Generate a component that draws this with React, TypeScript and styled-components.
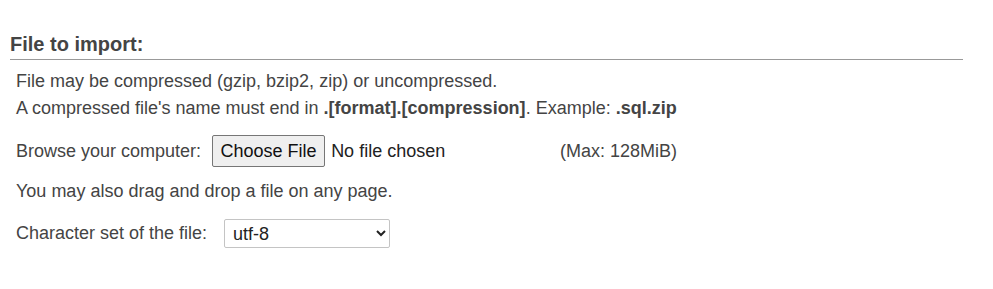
import styled, { createGlobalStyle } from "styled-components";

const GlobalStyle = createGlobalStyle`
  html, body {
    margin: 0;
    padding: 0;
    background: #fff;
  }
  body {
    font-family: "Liberation Sans", Arial, sans-serif;
    color: #444;
  }
`;

const Page = styled.div`
  padding: 32px 30px 0 10px;
`;

const Heading = styled.h3`
  margin: 0;
  padding: 0 0 3px;
  font-size: 20px;
  font-weight: bold;
  line-height: 24px;
  color: #444;
  border-bottom: 1px solid #999;
`;

const Body = styled.div`
  padding: 8px 0 0 6px;
  font-size: 18px;
`;

const Line = styled.p<{ $top?: number }>`
  margin: ${(p) => p.$top ?? 0}px 0 0;
  line-height: 27px;
`;

const Row = styled.div<{ $top?: number }>`
  display: flex;
  align-items: center;
  margin-top: ${(p) => p.$top ?? 0}px;
`;

const Label = styled.label<{ $gap: number }>`
  margin-right: ${(p) => p.$gap}px;
`;

const FileInput = styled.input`
  width: 338px;
  font: 18px "Liberation Sans", Arial, sans-serif;
  color: #222;

  &::file-selector-button {
    font: 18px "Liberation Sans", Arial, sans-serif;
    color: #111;
    height: 32px;
    padding: 0 7.5px;
    margin-right: 6px;
    background: #efefef;
    border: 1px solid #767676;
    border-radius: 2px;
  }
`;

const Max = styled.span`
  margin-left: 10px;
`;

const Select = styled.select`
  width: 166px;
  height: 29px;
  padding: 0 4px 0 4px;
  font: 18px "Liberation Sans", Arial, sans-serif;
  color: #222;
  background: #fff;
  border: 1px solid #c4c4c4;
  border-radius: 2px;
`;

export default function App() {
  return (
    <>
      <GlobalStyle />
      <Page>
        <Heading>File to import:</Heading>
        <Body>
          <Line>File may be compressed (gzip, bzip2, zip) or uncompressed.</Line>
          <Line>
            A compressed file's name must end in <b>.[format].[compression]</b>.
            Example: <b>.sql.zip</b>
          </Line>
          <Row $top={13}>
            <Label $gap={11} htmlFor="input_import_file">Browse your computer:</Label>
            <FileInput id="input_import_file" type="file" name="import_file" />
            <Max>(Max: 128MiB)</Max>
          </Row>
          <Line $top={11}>You may also drag and drop a file on any page.</Line>
          <Row $top={14}>
            <Label $gap={17} htmlFor="charset_of_file">Character set of the file:</Label>
            <Select id="charset_of_file" defaultValue="utf-8">
              <option value="utf-8">utf-8</option>
              <option value="latin1">iso-8859-1</option>
            </Select>
          </Row>
        </Body>
      </Page>
    </>
  );
}
